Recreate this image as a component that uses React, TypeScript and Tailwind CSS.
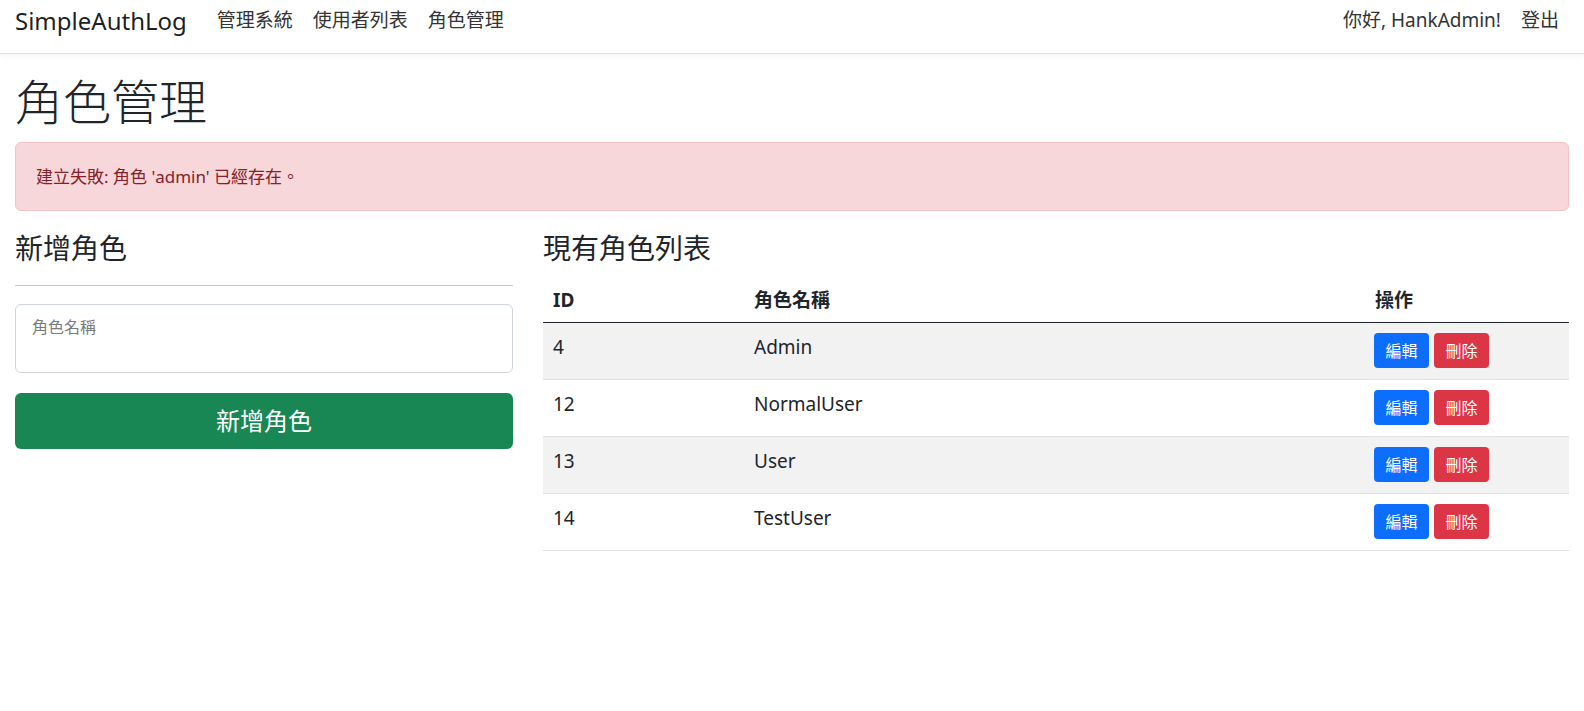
import React from "react";

const roles = [
  { id: 4, name: "Admin" },
  { id: 12, name: "NormalUser" },
  { id: 13, name: "User" },
  { id: 14, name: "TestUser" },
];

const navLinks = ["管理系統", "使用者列表", "角色管理"];

const App = () => {
  return (
    <div className="min-h-[711px] bg-white text-[#212529] font-['Noto_Sans','Noto_Sans_CJK_TC',sans-serif]">
      <nav className="h-[54px] flex items-center justify-between px-[15px] border-b border-[#dee2e6] shadow-[0_2px_6px_rgba(0,0,0,0.04)]">
        <div className="flex items-center -mt-[12px]">
          <span className="text-[24px] text-black/90 mr-[20px]">SimpleAuthLog</span>
          <ul className="flex items-center">
            {navLinks.map((link) => (
              <li key={link} className="px-[10px] text-[19px] text-[#333]">
                {link}
              </li>
            ))}
          </ul>
        </div>
        <div className="flex items-center gap-[20px] text-[19px] text-[#333] pr-[10px] -mt-[12px]">
          <span>你好, HankAdmin!</span>
          <span>登出</span>
        </div>
      </nav>

      <main className="px-[15px]">
        <h1 className="mt-[19px] text-[48px] leading-[58px] font-light">角色管理</h1>

        <div className="mt-[11px] h-[69px] flex items-center px-[20px] rounded-md border border-[#f5c2c7] bg-[#f8d7da] text-[#842029] text-[17px]">
          建立失敗: 角色 'admin' 已經存在。
        </div>

        <div className="mt-[20px] grid grid-cols-3 gap-[30px]">
          <section>
            <h3 className="text-[28px] leading-[34px]">新增角色</h3>
            <hr className="mt-[20px] border-t border-[#c8c8c8]" />
            <div className="mt-[18px] h-[69px] rounded-md border border-[#ced4da] px-[16px] pt-[10px]">
              <span className="text-[16px] text-[#7a7a7a]">角色名稱</span>
            </div>
            <button className="mt-[20px] w-full h-[56px] rounded-md bg-[#198754] text-white text-[24px]">
              新增角色
            </button>
          </section>

          <section className="col-span-2">
            <h3 className="text-[28px] leading-[34px]">現有角色列表</h3>
            <table className="mt-[19px] w-full border-collapse text-[19px]">
              <thead>
                <tr className="border-b border-[#212529]">
                  <th className="w-[201px] h-[38px] px-[10px] pb-[6px] text-left font-bold">ID</th>
                  <th className="w-[621px] h-[38px] px-[10px] pb-[6px] text-left font-bold">角色名稱</th>
                  <th className="h-[38px] px-[10px] pb-[6px] text-left font-bold">操作</th>
                </tr>
              </thead>
              <tbody>
                {roles.map((role, i) => (
                  <tr
                    key={role.id}
                    className={`border-b border-[#dee2e6] ${i % 2 === 0 ? "bg-[#f2f2f2]" : "bg-white"}`}
                  >
                    <td className="h-[57px] px-[10px] pb-[6px] align-middle">{role.id}</td>
                    <td className="h-[57px] px-[10px] pb-[6px] align-middle">{role.name}</td>
                    <td className="h-[57px] px-[9px] align-middle">
                      <div className="flex gap-[5px]">
                        <button className="w-[55px] h-[35px] rounded-[4px] bg-[#0d6efd] text-white text-[16px]">
                          編輯
                        </button>
                        <button className="w-[55px] h-[35px] rounded-[4px] bg-[#dc3545] text-white text-[16px]">
                          刪除
                        </button>
                      </div>
                    </td>
                  </tr>
                ))}
              </tbody>
            </table>
          </section>
        </div>
      </main>
    </div>
  );
};

export default App;
